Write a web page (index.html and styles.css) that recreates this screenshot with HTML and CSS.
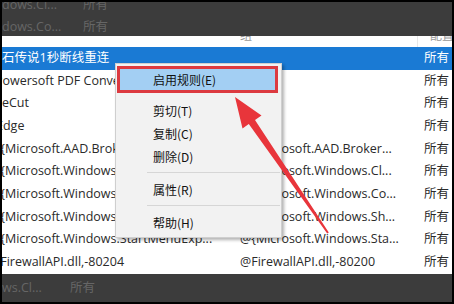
FILE: index.html
```html
<!DOCTYPE html>
<html lang="zh-CN">
<head>
    <meta charset="UTF-8">
    <title>启用规则</title>
    <link rel="stylesheet" href="styles.css">
</head>
<body>
    <div class="frame">
        <div class="screen">
            <div class="band band-top">
                <div class="band-row first"><span class="b-name">dows.Cl...</span><span class="b-all">所有</span></div>
                <div class="band-row"><span class="b-name">dows.Co...</span><span class="b-all">所有</span></div>
            </div>

            <div class="list">
                <div class="row head">
                    <div class="cell c1"></div>
                    <div class="cell c2">组</div>
                    <div class="cell c3">配置</div>
                </div>
                <div class="row selected">
                    <div class="cell c1">石传说1秒断线重连</div>
                    <div class="cell c2"></div>
                    <div class="cell c3">所有</div>
                </div>
                <div class="row">
                    <div class="cell c1"><span class="cut cut-p">Powersoft PDF Converter</span></div>
                    <div class="cell c2"></div>
                    <div class="cell c3">所有</div>
                </div>
                <div class="row">
                    <div class="cell c1"><span class="cut cut-e">EeCut</span></div>
                    <div class="cell c2"></div>
                    <div class="cell c3">所有</div>
                </div>
                <div class="row">
                    <div class="cell c1"><span class="cut cut-edge">Edge</span></div>
                    <div class="cell c2"></div>
                    <div class="cell c3">所有</div>
                </div>
                <div class="row">
                    <div class="cell c1"><span class="cut cut-at">@{Microsoft.AAD.BrokerPlugin</span></div>
                    <div class="cell c2">@{Microsoft.AAD.Broker...</div>
                    <div class="cell c3">所有</div>
                </div>
                <div class="row">
                    <div class="cell c1"><span class="cut cut-at">@{Microsoft.Windows.CloudExperience</span></div>
                    <div class="cell c2">@{Microsoft.Windows.Cl...</div>
                    <div class="cell c3">所有</div>
                </div>
                <div class="row">
                    <div class="cell c1"><span class="cut cut-at">@{Microsoft.Windows.ContentDelivery</span></div>
                    <div class="cell c2">@{Microsoft.Windows.Co...</div>
                    <div class="cell c3">所有</div>
                </div>
                <div class="row">
                    <div class="cell c1"><span class="cut cut-at">@{Microsoft.Windows.ShellExperience</span></div>
                    <div class="cell c2">@{Microsoft.Windows.Sh...</div>
                    <div class="cell c3">所有</div>
                </div>
                <div class="row">
                    <div class="cell c1"><span class="cut cut-at">@{Microsoft.Windows.StartMenuExp...</span></div>
                    <div class="cell c2">@{Microsoft.Windows.Sta...</div>
                    <div class="cell c3">所有</div>
                </div>
                <div class="row">
                    <div class="cell c1"><span class="cut cut-f">@FirewallAPI.dll,-80204</span></div>
                    <div class="cell c2">@FirewallAPI.dll,-80200</div>
                    <div class="cell c3">所有</div>
                </div>
            </div>

            <div class="band band-bottom">
                <div class="band-row"><span class="b-name short">ws.Cl...</span><span class="b-all">所有</span></div>
            </div>

            <!-- right-click menu over the list -->
            <div class="menu">
                <div class="item marked">启用规则(E)</div>
                <div class="item first">剪切(T)</div>
                <div class="item">复制(C)</div>
                <div class="item">删除(D)</div>
                <div class="sep"></div>
                <div class="item">属性(R)</div>
                <div class="sep"></div>
                <div class="item">帮助(H)</div>
            </div>
        </div>

        <svg class="arrow" width="454" height="304" viewBox="0 0 454 304">
            <polygon points="235,97 261.5,115.5 255,120 328.8,232.4 327.2,233.6 248.8,124 242.5,128.5" fill="#e8353b"/>
        </svg>
    </div>
</body>
</html>
```

FILE: styles.css
```css
body {
    margin: 0;
    background: #000;
}
.frame {
    position: relative;
    width: 454px;
    height: 304px;
    padding: 2px;
    box-sizing: border-box;
    background: #000;
}
.screen {
    position: relative;
    width: 450px;
    height: 300px;
    overflow: hidden;
    background: #fff;
    font-family: "Open Sans", "Noto Sans CJK SC", sans-serif;
    font-size: 12.5px;
    color: #2a2a2a;
}
.band {
    background: #3c3c3c;
    color: #666;
    overflow: hidden;
}
.band-top {
    height: 34px;
}
.band-bottom {
    height: 28px;
}
.band-row {
    display: flex;
    height: 22px;
    line-height: 22px;
}
.band-row.first {
    margin-top: -8px;
}
.band-bottom .band-row {
    height: 28px;
    line-height: 28px;
}
.b-name {
    width: 81px;
}
.b-name.short {
    width: 68px;
}
.list {
    height: 238px;
    overflow: hidden;
}
.row {
    display: grid;
    grid-template-columns: 238px 177px 1fr;
    height: 22.67px;
    line-height: 22.67px;
    white-space: nowrap;
}
.row.head {
    height: 11px;
    line-height: 0;
    color: #999;
    font-size: 12px;
}
.row.head .c3 {
    border-left: 1px solid #e8e8e8;
    padding-left: 12px;
}
.row.selected {
    background: #1a7ad4;
    color: #fff;
}
.cell {
    overflow: hidden;
}
.c3 {
    padding-left: 7px;
}
.cut-p {
    margin-left: -7px;
}
.cut-e {
    margin-left: -7px;
}
.cut-edge {
    margin-left: -6px;
}
.cut-at {
    margin-left: -13px;
}
.cut-f {
    margin-left: -13px;
}
.menu {
    position: absolute;
    left: 113px;
    top: 61px;
    width: 165px;
    padding: 2px 0 3px;
    background: #f2f2f2;
    border: 1px solid #cfcfcf;
    box-shadow: 2px 2px 3px rgba(0, 0, 0, 0.3);
    font-family: "Noto Sans CJK SC", sans-serif;
    font-size: 12px;
    color: #111;
}
.item {
    height: 23px;
    line-height: 23px;
    padding-left: 37px;
}
.item.first {
    margin-top: 6px;
}
.item.marked {
    height: 21px;
    line-height: 21px;
    margin: 0 3px 0 1px;
    padding-left: 33px;
    background: #a3cff3;
    border: 3px solid #dc3a40;
}
.sep {
    height: 1px;
    margin: 4px 1px 5px 31px;
    background: #d6d6d6;
}
.arrow {
    position: absolute;
    left: 0;
    top: 0;
    pointer-events: none;
}
```
